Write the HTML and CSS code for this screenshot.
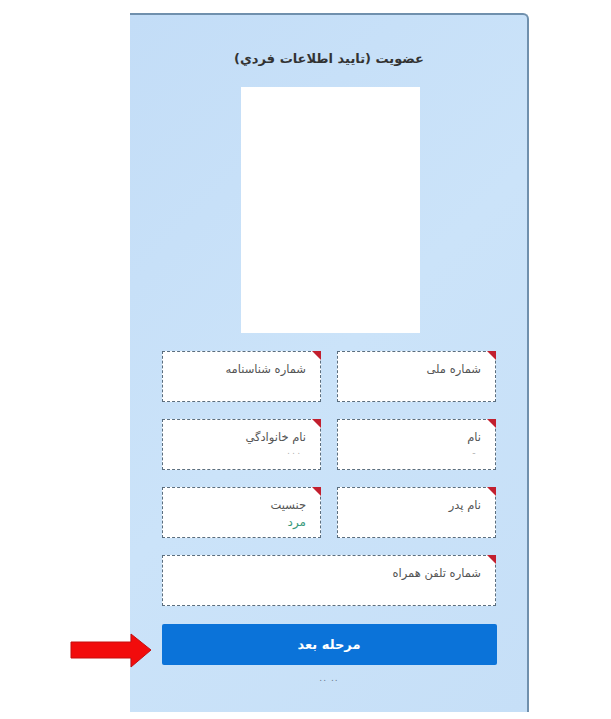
FILE: index.html
```html
<!DOCTYPE html>
<html lang="fa">
<head>
<meta charset="utf-8">
<link rel="stylesheet" href="styles.css">
</head>
<body>
<div class="page">
  <div class="panel" dir="rtl">
    <h1 class="title">عضویت (تایید اطلاعات فردي)</h1>
    <div class="photo"></div>
    <div class="fields">
      <div class="field"><span class="label">شماره ملی</span></div>
      <div class="field"><span class="label">شماره شناسنامه</span></div>
      <div class="field"><span class="label">نام</span><span class="mask">ـ</span></div>
      <div class="field"><span class="label">نام خانوادگي</span><span class="mask">. . .</span></div>
      <div class="field"><span class="label">نام پدر</span></div>
      <div class="field"><span class="label">جنسیت</span><span class="value">مرد</span></div>
      <div class="field wide"><span class="label">شماره تلفن همراه</span></div>
    </div>
    <button class="next">مرحله بعد</button>
    <div class="foot">.. ..</div>
  </div>
  <svg class="arrow" width="84" height="36" viewBox="0 0 84 36">
    <polygon points="1,9 61,9 61,1 81,17 61,34 61,25 1,25" fill="#f20c0c" stroke="#c40f0f" stroke-width="1"/>
  </svg>
</div>
</body>
</html>
```
FILE: styles.css
```css
html, body {
  margin: 0;
  padding: 0;
  background: #ffffff;
}
body {
  font-family: "DejaVu Sans", "Noto Sans", sans-serif;
}
.page {
  position: relative;
  width: 611px;
  height: 719px;
  padding-top: 13px;
  box-sizing: border-box;
}
.panel {
  margin-left: 130px;
  width: 399px;
  height: 699px;
  box-sizing: border-box;
  background: linear-gradient(135deg, #c3ddf7 0%, #cbe3f9 50%, #c6dff7 100%);
  border-top: 2px solid #7090ad;
  border-right: 2px solid #7090ad;
  border-top-right-radius: 6px;
  padding: 32px 31px 0 32px;
  display: flex;
  flex-direction: column;
  align-items: center;
}
.title {
  margin: 0;
  font-size: 13px;
  font-weight: bold;
  color: #333333;
  line-height: 24px;
  height: 24px;
}
.photo {
  margin-top: 16px;
  width: 179px;
  height: 246px;
  background: #ffffff;
  margin-left: 2px;
}
.fields {
  margin-top: 18px;
  width: 334px;
  display: grid;
  grid-template-columns: 159px 159px;
  column-gap: 16px;
  row-gap: 17px;
}
.field {
  position: relative;
  height: 51px;
  box-sizing: border-box;
  background: #ffffff;
  border: 1px dashed #5b6e7e;
  padding: 8px 14px 0 10px;
  display: flex;
  flex-direction: column;
  align-items: flex-start;
}
.field::after {
  content: "";
  position: absolute;
  top: -1px;
  right: -1px;
  width: 0;
  height: 0;
  border-top: 9px solid #c21f2e;
  border-left: 9px solid transparent;
}
.wide {
  grid-column: 1 / span 2;
}
.label {
  font-size: 11.5px;
  color: #555555;
  line-height: 18px;
}
.value {
  font-size: 12px;
  color: #3a9a7c;
  line-height: 16px;
}
.mask {
  font-size: 8px;
  color: #aaaaaa;
  line-height: 12px;
  padding-right: 6px;
}
.next {
  margin-top: 18px;
  width: 335px;
  height: 41px;
  border: none;
  border-radius: 2px;
  background: #0b73d9;
  color: #ffffff;
  font-family: "DejaVu Sans", sans-serif;
  font-weight: bold;
  font-size: 13px;
}
.foot {
  margin-top: 8px;
  font-size: 9px;
  color: #6a7a8a;
  letter-spacing: 1px;
}
.arrow {
  position: absolute;
  left: 70px;
  top: 633px;
}
```
